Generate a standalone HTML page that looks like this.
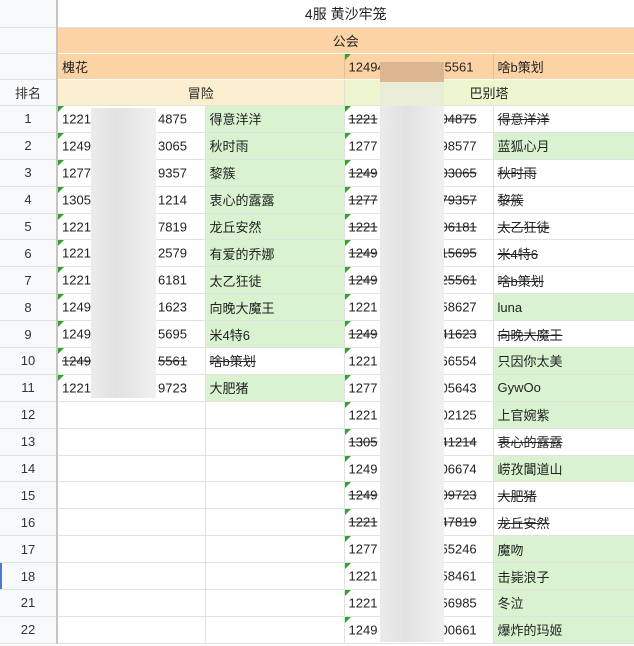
<!DOCTYPE html>
<html><head><meta charset="utf-8"><style>
*{margin:0;padding:0;box-sizing:border-box}
body{width:634px;height:646px;overflow:hidden;background:#fff;font-family:"Liberation Sans","Noto Sans CJK SC",sans-serif;font-size:13px;color:#222;position:relative}
table{border-collapse:collapse;table-layout:fixed;position:absolute;left:0;top:-1px;width:634px}
td{border:1px solid #e1e1e1;padding:0 4px;white-space:nowrap;overflow:hidden;position:relative;vertical-align:middle}
td.h{background:#f8f9fa;text-align:center;color:#333;border-right:2px solid #c4c4c4;border-left:none}
.o{background:#fcd3a5;border-color:#fff}
.c{text-align:center}
.g{background:#d9f3d1}
.s,.s span{text-decoration:line-through}
.tri::before{content:"";position:absolute;left:0;top:0;border-top:6px solid #2fa52f;border-right:6px solid transparent}
.p{position:absolute;left:4px;top:50%;transform:translateY(-50%)}
.q{position:absolute;left:100px;top:50%;transform:translateY(-50%)}
.q2{position:absolute;left:96px;top:50%;transform:translateY(-50%)}
tr.r td{height:26.9px}
.blur{position:absolute;background:linear-gradient(90deg,#ebebeb,#e2e2e2 40%,#e9e9e9 70%,#efefef)}
</style></head><body>
<table>
<colgroup><col style="width:57px"><col style="width:148px"><col style="width:139px"><col style="width:149px"><col style="width:141px"></colgroup>
<tr style="height:28px"><td class="h"></td><td colspan="4" class="c" style="font-size:14px">4服 黄沙牢笼</td></tr>
<tr style="height:26px"><td class="h"></td><td colspan="4" class="c o">公会</td></tr>
<tr style="height:26px"><td class="h"></td><td colspan="2" class="o" style="border-right-color:#e0c0a0">槐花</td><td class="o tri" style="border-left:1px solid #e0c0a0;border-right:1px solid #e0c0a0"><span class="p">12494</span><span class="q">5561</span></td><td class="o">啥b策划</td></tr>
<tr style="height:26px"><td class="h">排名</td><td colspan="2" class="c" style="background:#fbefcf">冒险</td><td colspan="2" class="c" style="background:#eef6cf">巴别塔</td></tr>

<tr class="r"><td class="h">1</td><td class="tri"><span class="p">1221</span><span class="q">4875</span></td><td class="g">得意洋洋</td><td class="tri s"><span class="p">1221</span><span class="q2">04875</span></td><td class="s">得意洋洋</td></tr>
<tr class="r"><td class="h">2</td><td class="tri"><span class="p">1249</span><span class="q">3065</span></td><td class="g">秋时雨</td><td class="tri"><span class="p">1277</span><span class="q2">98577</span></td><td class="g">蓝狐心月</td></tr>
<tr class="r"><td class="h">3</td><td class="tri"><span class="p">1277</span><span class="q">9357</span></td><td class="g">黎簇</td><td class="tri s"><span class="p">1249</span><span class="q2">03065</span></td><td class="s">秋时雨</td></tr>
<tr class="r"><td class="h">4</td><td class="tri"><span class="p">1305</span><span class="q">1214</span></td><td class="g">衷心的露露</td><td class="tri s"><span class="p">1277</span><span class="q2">79357</span></td><td class="s">黎簇</td></tr>
<tr class="r"><td class="h">5</td><td class="tri"><span class="p">1221</span><span class="q">7819</span></td><td class="g">龙丘安然</td><td class="tri s"><span class="p">1221</span><span class="q2">06181</span></td><td class="s">太乙狂徒</td></tr>
<tr class="r"><td class="h">6</td><td class="tri"><span class="p">1221</span><span class="q">2579</span></td><td class="g">有爱的乔娜</td><td class="tri s"><span class="p">1249</span><span class="q2">15695</span></td><td class="s">米4特6</td></tr>
<tr class="r"><td class="h">7</td><td class="tri"><span class="p">1221</span><span class="q">6181</span></td><td class="g">太乙狂徒</td><td class="tri s"><span class="p">1249</span><span class="q2">25561</span></td><td class="s">啥b策划</td></tr>
<tr class="r"><td class="h">8</td><td class="tri"><span class="p">1249</span><span class="q">1623</span></td><td class="g">向晚大魔王</td><td class="tri"><span class="p">1221</span><span class="q2">58627</span></td><td class="g">luna</td></tr>
<tr class="r"><td class="h">9</td><td class="tri"><span class="p">1249</span><span class="q">5695</span></td><td class="g">米4特6</td><td class="tri s"><span class="p">1249</span><span class="q2">41623</span></td><td class="s">向晚大魔王</td></tr>
<tr class="r"><td class="h">10</td><td class="tri s"><span class="p">1249</span><span class="q">5561</span></td><td class="s">啥b策划</td><td class="tri"><span class="p">1221</span><span class="q2">66554</span></td><td class="g">只因你太美</td></tr>
<tr class="r"><td class="h">11</td><td class="tri"><span class="p">1221</span><span class="q">9723</span></td><td class="g">大肥猪</td><td class="tri"><span class="p">1277</span><span class="q2">05643</span></td><td class="g">GywOo</td></tr>
<tr class="r"><td class="h">12</td><td></td><td></td><td class="tri"><span class="p">1221</span><span class="q2">02125</span></td><td class="g">上官婉紫</td></tr>
<tr class="r"><td class="h">13</td><td></td><td></td><td class="tri s"><span class="p">1305</span><span class="q2">41214</span></td><td class="s">衷心的露露</td></tr>
<tr class="r"><td class="h">14</td><td></td><td></td><td class="tri"><span class="p">1249</span><span class="q2">06674</span></td><td class="g">崂孜閶道山</td></tr>
<tr class="r"><td class="h">15</td><td></td><td></td><td class="tri s"><span class="p">1249</span><span class="q2">09723</span></td><td class="s">大肥猪</td></tr>
<tr class="r"><td class="h">16</td><td></td><td></td><td class="tri s"><span class="p">1221</span><span class="q2">47819</span></td><td class="s">龙丘安然</td></tr>
<tr class="r"><td class="h">17</td><td></td><td></td><td class="tri"><span class="p">1277</span><span class="q2">55246</span></td><td class="g">魔吻</td></tr>
<tr class="r"><td class="h" style="box-shadow:inset 2px 0 0 #4a7bd0">18</td><td></td><td></td><td class="tri"><span class="p">1221</span><span class="q2">58461</span></td><td class="g">击毙浪子</td></tr>
<tr class="r"><td class="h">21</td><td></td><td></td><td class="tri"><span class="p">1221</span><span class="q2">56985</span></td><td class="g">冬泣</td></tr>
<tr class="r"><td class="h">22</td><td></td><td></td><td class="tri"><span class="p">1249</span><span class="q2">00661</span></td><td class="g">爆炸的玛姬</td></tr>
</table>
<div class="blur" style="left:91px;top:108px;width:65px;height:290px"></div>
<div class="blur" style="left:380px;top:62px;width:64px;height:20px;background:#dcb690"></div>
<div class="blur" style="left:380px;top:82px;width:64px;height:24px;background:#eaeed8"></div>
<div class="blur" style="left:380px;top:106px;width:64px;height:536px"></div>
</body></html>
